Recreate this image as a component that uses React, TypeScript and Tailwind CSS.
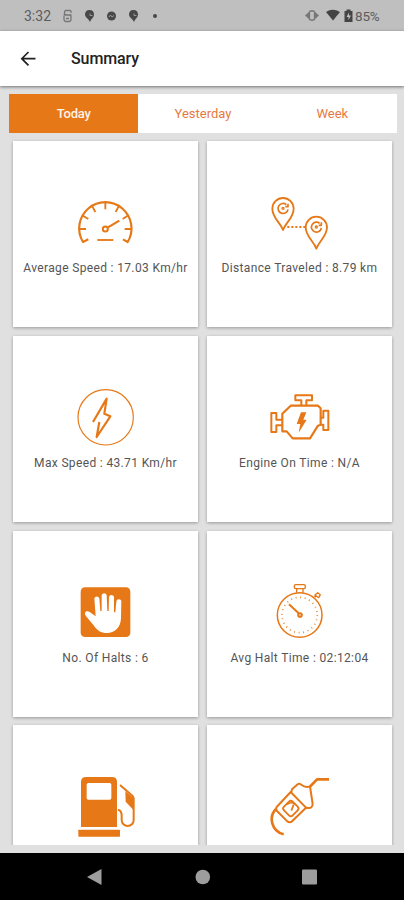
import type { ReactNode } from "react";

interface ICard {
  id: string;
  label?: string;
  viewBox: string;
  icon: ReactNode;
}

const ORANGE = "#e67817";

const MapPin = ({ x, y }: { x: number; y: number }) => (
  <g transform={`translate(${x} ${y})`}>
    <path d="M0 44C-9 20-32 7-32-20a32 32 0 0 1 64 0C32 7 9 20 0 44Z" strokeWidth={5.5} />
    <path d="M10-32a15 15 0 1 0 5 14M15-35v9h-8" strokeWidth={5} />
    <circle cx={0} cy={-21} r={3} strokeWidth={4} />
  </g>
);

const cards: ICard[] = [
  {
    id: "average-speed",
    label: "Average Speed : 17.03 Km/hr",
    viewBox: "45 9 183 180",
    icon: (
      <>
        <path d="M85 148L69 156A78.500 78.500 0 1 1 203 156L189 148" strokeWidth={6.5} />
        <path
          d="M58 117h20M213 117h-19M136 38v20M97 49l9 17M176 49l-9 17M69 77l16 10M203 77l-15 10"
          strokeWidth={5.5}
        />
        <circle cx={136} cy={117} r={7.5} strokeWidth={6} />
        <path d="M144 112L178 92" strokeWidth={6.5} />
        <path d="M112 150h48" strokeWidth={5.5} />
      </>
    ),
  },
  {
    id: "distance",
    label: "Distance Traveled : 8.79 km",
    viewBox: "27 9 183 180",
    icon: (
      <>
        <MapPin x={69} y={76} />
        <MapPin x={169} y={132} />
        <path d="M82 111h55" strokeWidth={6} strokeDasharray="6 6" />
      </>
    ),
  },
  {
    id: "max-speed",
    label: "Max Speed : 43.71 Km/hr",
    viewBox: "30 24 183 180",
    icon: (
      <>
        <circle cx={122} cy={112} r={83} strokeWidth={3.5} />
        <path d="M84 126L125 56L118 101L136 109L95 171L103 126" strokeWidth={6.5} />
      </>
    ),
  },
  {
    id: "engine-on",
    label: "Engine On Time : N/A",
    viewBox: "27 9 183 180",
    icon: (
      <>
        <path
          d="M67 86L92 62H174L182 70V119L174 122L150 160H98L80 139H67Z"
          strokeWidth={6.5}
        />
        <path d="M124 61V46H106V31H156V46H139V61" strokeWidth={6} />
        <path d="M67 104H49V84H34V141H49V121H67" strokeWidth={6} />
        <path d="M182 98H190V77H205V135H190V119H182" strokeWidth={6} />
        <path d="M123 82H139L130 104H140L116 143L121 117H110Z" fill={ORANGE} stroke="none" />
      </>
    ),
  },
  {
    id: "halts",
    label: "No. Of Halts : 6",
    viewBox: "30 24 183 180",
    icon: (
      <>
        <rect x={47} y={37} width={149} height={149} rx={13} fill={ORANGE} stroke="none" />
        <path
          d="M88 70a8 8 0 0 1 15 0L106 108H110L110 60a8 8 0 0 1 15 0L127 108H131L132 65a8 8 0 0 1 15 0L147 112H151L154 80a7.500 7.500 0 0 1 15 1L168 130C167 158 149 174 126 174C108 174 96 166 87 152L62 122C56 112 64 105 74 111L92 124Z"
          fill="white"
          stroke="none"
        />
      </>
    ),
  },
  {
    id: "halt-time",
    label: "Avg Halt Time : 02:12:04",
    viewBox: "27 24 183 180",
    icon: (
      <>
        <circle cx={119} cy={120} r={67} strokeWidth={4.5} />
        <circle cx={119} cy={120} r={53} strokeWidth={5} strokeDasharray="2.5 11.375" />
        <rect x={103} y={29} width={33} height={12} rx={4} strokeWidth={4} />
        <path d="M110 42v11M129 42v11" strokeWidth={4} />
        <path d="M163 62L168 67M165 60L176 68L181 59L173 53Z" strokeWidth={4} />
        <path d="M87 88L116 115" strokeWidth={6} />
        <circle cx={120} cy={120} r={5.5} strokeWidth={6} />
      </>
    ),
  },
  {
    id: "fuel-used",
    viewBox: "30 36 183 180",
    icon: (
      <>
        <path
          d="M48 186V51Q48 36 63 36H141Q156 36 156 51V186ZM70 54Q65 54 65 59V99Q65 104 70 104H134Q139 104 139 99V59Q139 54 134 54Z"
          fill={ORANGE}
          fillRule="evenodd"
          stroke="none"
        />
        <rect x={40} y={194} width={125} height={21} rx={2} fill={ORANGE} stroke="none" />
        <path
          d="M165 60L202 92Q206 96 206 102V165a18 18 0 0 1-36 0V151Q170 137 159 134"
          strokeWidth={6}
        />
        <path d="M181 79L206 99V136L182 110Z" fill={ORANGE} stroke="none" />
      </>
    ),
  },
  {
    id: "fuel-filled",
    viewBox: "27 36 183 180",
    icon: (
      <>
        <path d="M92 81L50 126Q46 132 51 138L82 169Q90 175 97 168L138 128Z" strokeWidth={6} />
        <path
          d="M94 81L96 73L114 57Q119 54 125 60Q136 69 150 64L158 117Q157 130 145 129L137 128"
          strokeWidth={6}
        />
        <path d="M149 66L171 43H207" strokeWidth={8} />
        <path d="M48 132C25 155 34 198 71 208" strokeWidth={8} />
        <rect
          x={74}
          y={112}
          width={37}
          height={37}
          rx={8}
          strokeWidth={5.5}
          transform="rotate(45 92.5 130.5)"
        />
        <path d="M80 119Q93 108 106 118M94 137L101 119" strokeWidth={5} />
      </>
    ),
  },
];

const StatusBar = () => (
  <div className="flex h-[31px] shrink-0 items-center bg-[#bfbfbf] pt-px text-[#5c5c5c]">
    <span className="ml-6 w-[38px] text-[14px] leading-4">3:32</span>
    <svg className="h-4 w-[100px]" viewBox="0 0 100 16" fill="none">
      <path
        d="M9 5V3.500Q9 2.500 8 2.500H4Q2.500 2.500 2.500 4V5Q2.500 7 5 7H7Q9 7 9 9V11Q9 13.500 7 13.500H4Q2 13.500 2 11V8M1.500 7H9.500M4 10.500H7"
        stroke="#777"
        strokeWidth="1.300"
      />
      <g fill="#484848">
        <path d="M27.500 2C30.500 2 32 4 32 6.500C32 9.500 29 11 28 14C27 11 23 9.500 23 6.500C23 4 24.500 2 27.500 2Z" />
        <circle cx="49.500" cy="8" r="4.500" />
        <path d="M71.500 2C74.500 2 76 4 76 6.500C76 9.500 73 11 72 14C71 11 67 9.500 67 6.500C67 4 68.500 2 71.500 2Z" />
        <circle cx="93" cy="8" r="2" />
      </g>
      <path
        d="M28 5.500V7.500H30.500M72 5.500V7.500H74.500M47 9L48.500 7L50 9L52 7.500"
        stroke="#999"
      />
    </svg>
    <svg className="ml-auto h-4 w-[50px]" viewBox="0 0 50 16">
      <path d="M5.500 3.500V11.500L1 7.500ZM10.500 3.500V11.500L15 7.500Z" fill="#777" />
      <rect x="5.500" y="3" width="5" height="9" rx="1" fill="none" stroke="#777" strokeWidth="1.300" />
      <path d="M22 4Q28.500-.5 36 4L29 12.500Z" fill="#444" />
      <path d="M40.500 3H42.500V1.500H46.500V3H48.500V14H40.500Z" fill="#444" />
      <path d="M45 4.500L42.500 9H44.500V12L47 7.500H45Z" fill="#bfbfbf" />
    </svg>
    <span className="mr-[22px] w-[28px] pl-px text-[13.500px] leading-4 tracking-[-0.2px]">85%</span>
  </div>
);

const Header = () => (
  <header className="relative z-10 flex h-[55px] shrink-0 items-center bg-white shadow-[0_1px_3px_rgba(0,0,0,0.5)]">
    <svg className="ml-5 h-4 w-4" viewBox="0 0 16 16" fill="none" stroke="#222" strokeWidth="1.700">
      <path d="M8.500 1L1.800 7.700L8.500 14.400M2 7.700H15.500" />
    </svg>
    <h1 className="ml-[35px] text-[16px] font-medium leading-5 tracking-[-0.1px] text-[#222]">
      Summary
    </h1>
  </header>
);

const Tabs = () => (
  <div className="mr-[7px] ml-[9px] grid h-[39px] shrink-0 grid-cols-3 bg-white text-[13px] font-medium tracking-[-0.2px] text-[#e8793f]">
    <button className="bg-[#e67817] text-[#fff3e8]">Today</button>
    <button className="font-normal tracking-normal">Yesterday</button>
    <button className="font-normal tracking-normal">Week</button>
  </div>
);

const Card = ({ label, viewBox, icon }: ICard) => (
  <div className="flex h-[186px] flex-col items-center bg-white pt-[52px] shadow-[0_1px_3px_rgba(0,0,0,0.32)]">
    <svg
      className="h-[60px] w-[61px] shrink-0"
      viewBox={viewBox}
      fill="none"
      stroke={ORANGE}
      strokeLinejoin="round"
    >
      {icon}
    </svg>
    {label && (
      <p className="mt-[7px] whitespace-nowrap text-[12px] leading-4 tracking-[0.35px] text-[#555]">
        {label}
      </p>
    )}
  </div>
);

const NavBar = () => (
  <div className="flex h-[47px] shrink-0 items-center justify-center bg-black">
    <svg className="h-4 w-[232px]" viewBox="0 0 232 16" fill="#9d9d9d">
      <path d="M1 8L15.500 0V16Z" />
      <circle cx="116.800" cy="8" r="7.300" />
      <rect x="216" y=".5" width="15" height="15" rx="1" />
    </svg>
  </div>
);

const App = () => {
  return (
    <div className="flex h-[900px] w-[404px] flex-col overflow-hidden bg-[#e0e0e0] font-['Roboto',sans-serif]">
      <StatusBar />
      <Header />
      <main className="flex min-h-0 flex-1 flex-col pt-2 pb-2">
        <Tabs />
        <div className="mt-1 min-h-0 flex-1 overflow-hidden px-[13px] pt-[4.400px]">
          <div className="grid grid-cols-[185px_185px] gap-x-[9px] gap-y-[8.600px]">
            {cards.map((card) => (
              <Card key={card.id} {...card} />
            ))}
          </div>
        </div>
      </main>
      <NavBar />
    </div>
  );
};

export default App;
